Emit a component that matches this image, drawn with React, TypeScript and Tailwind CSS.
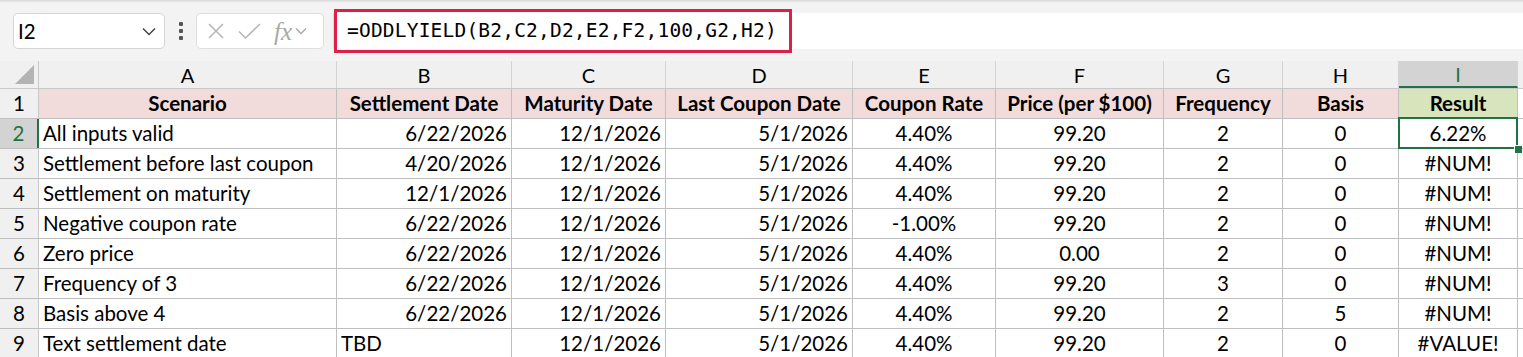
import React from "react";

const cols = ["A", "B", "C", "D", "E", "F", "G", "H", "I"];
const widths = [298, 175, 154, 187, 143, 168, 119, 116, 119];

const headers = [
  "Scenario",
  "Settlement Date",
  "Maturity Date",
  "Last Coupon Date",
  "Coupon Rate",
  "Price (per $100)",
  "Frequency",
  "Basis",
  "Result",
];

const rows: string[][] = [
  ["All inputs valid", "6/22/2026", "12/1/2026", "5/1/2026", "4.40%", "99.20", "2", "0", "6.22%"],
  ["Settlement before last coupon", "4/20/2026", "12/1/2026", "5/1/2026", "4.40%", "99.20", "2", "0", "#NUM!"],
  ["Settlement on maturity", "12/1/2026", "12/1/2026", "5/1/2026", "4.40%", "99.20", "2", "0", "#NUM!"],
  ["Negative coupon rate", "6/22/2026", "12/1/2026", "5/1/2026", "-1.00%", "99.20", "2", "0", "#NUM!"],
  ["Zero price", "6/22/2026", "12/1/2026", "5/1/2026", "4.40%", "0.00", "2", "0", "#NUM!"],
  ["Frequency of 3", "6/22/2026", "12/1/2026", "5/1/2026", "4.40%", "99.20", "3", "0", "#NUM!"],
  ["Basis above 4", "6/22/2026", "12/1/2026", "5/1/2026", "4.40%", "99.20", "2", "5", "#NUM!"],
  ["Text settlement date", "TBD", "12/1/2026", "5/1/2026", "4.40%", "99.20", "2", "0", "#VALUE!"],
];

function align(ci: number, v: string) {
  if (ci === 0) return "justify-start pl-[4px]";
  if (ci <= 3) {
    if (v === "TBD") return "justify-start pl-[4px]";
    return "justify-end pr-[4px]";
  }
  return "justify-center";
}

export default function App() {
  return (
    <div className="w-[1523px] h-[357px] overflow-hidden bg-white font-['Lato',sans-serif] text-[20.5px] text-black">
      {/* toolbar */}
      <div className="relative h-[61px] bg-[#f3f3f3]">
        <div className="h-[3px] bg-gradient-to-b from-[#d9d9d9] to-[#f3f3f3]" />
        <div className="flex items-start pt-[10px] pl-[13px]">
          <div className="w-[152px] h-[36px] bg-white border border-[#d5d5d5] rounded-[5px] flex items-center justify-between pl-[4px] pr-[8px]">
            <span className="text-[20.5px]">I2</span>
            <svg width="14" height="9" viewBox="0 0 14 9" fill="none">
              <path d="M1 1.5l6 6 6-6" stroke="#444" strokeWidth="1.5" />
            </svg>
          </div>
          <div className="w-[31px] h-[36px] flex flex-col items-center justify-center gap-[3px]">
            <span className="w-[4px] h-[4px] bg-[#555] rounded-[1px]" />
            <span className="w-[4px] h-[4px] bg-[#555] rounded-[1px]" />
            <span className="w-[4px] h-[4px] bg-[#555] rounded-[1px]" />
          </div>
          <div className="w-[128px] h-[36px] bg-white border border-[#dedede] rounded-[5px] flex items-center pl-[10px] gap-[13px]">
            <svg width="18" height="18" viewBox="0 0 18 18" fill="none">
              <path d="M2 2l14 14M16 2L2 16" stroke="#b4b4b4" strokeWidth="1.5" />
            </svg>
            <svg width="23" height="17" viewBox="0 0 23 17" fill="none">
              <path d="M1 8.5l6.5 6.5L22 1" stroke="#b4b4b4" strokeWidth="1.5" />
            </svg>
            <div className="flex items-center gap-[3px]">
              <span className="font-['Liberation_Serif',serif] italic text-[25px] text-[#a8a8a8] leading-none">fx</span>
              <svg width="12" height="8" viewBox="0 0 12 8" fill="none">
                <path d="M1 1.5l5 5 5-5" stroke="#a8a8a8" strokeWidth="1.4" />
              </svg>
            </div>
          </div>
          <div className="ml-[9px] flex-1 h-[36px] bg-white border-l border-[#dcdcdc] flex items-center pl-[13px]">
            <span className="font-['DejaVu_Sans_Mono',monospace] text-[19.5px] tracking-[0.2px]">
              =ODDLYIELD(B2,C2,D2,E2,F2,100,G2,H2)
            </span>
          </div>
        </div>
        <div className="absolute left-[334px] top-[9px] w-[458px] h-[44px] border-[3px] border-[#dc1f4b]" />
      </div>

      {/* column headers */}
      <div className="flex h-[28px] bg-[#f0f0f0] border-b border-[#c8c8c8]">
        <div className="relative w-[39px] border-r border-[#c8c8c8] shrink-0">
          <svg className="absolute right-[4px] bottom-[4px]" width="19" height="19" viewBox="0 0 19 19">
            <path d="M19 0L19 19L0 19Z" fill="#b3b3b3" />
          </svg>
        </div>
        {cols.map((c, i) => (
          <div
            key={c}
            style={{ width: widths[i] }}
            className={
              "shrink-0 flex items-center justify-center border-r border-[#d4d4d4] text-[20px] " +
              (c === "I" ? "bg-[#d3d3d3] text-[#217346] border-b-2 border-b-[#217346]" : "")
            }
          >
            {c}
          </div>
        ))}
        <div className="flex-1" />
      </div>

      {/* row 1 */}
      <div className="flex h-[30px] border-b border-[#bfbfbf]">
        <div className="w-[39px] shrink-0 bg-[#f0f0f0] border-r border-[#c8c8c8] flex items-center justify-center">1</div>
        {headers.map((h, i) => (
          <div
            key={h}
            style={{ width: widths[i] }}
            className={
              "shrink-0 flex items-center justify-center font-bold border-r border-[#bfbfbf] " +
              (i === 8 ? "bg-[#d8e4bc]" : "bg-[#f2dcdb]")
            }
          >
            {h}
          </div>
        ))}
        <div className="flex-1" />
      </div>

      {rows.map((r, ri) => (
        <div key={ri} className={"flex h-[30px] border-b border-[#bfbfbf] " + (ri === 0 ? "relative z-10" : "")}>
          <div
            className={
              "w-[39px] shrink-0 border-r flex items-center justify-center " +
              (ri === 0
                ? "bg-[#d3d3d3] text-[#217346] border-r-2 border-r-[#217346]"
                : "bg-[#f0f0f0] border-[#c8c8c8]")
            }
          >
            {ri + 2}
          </div>
          {r.map((v, ci) => (
            <div
              key={ci}
              style={{ width: widths[ci] }}
              className={"relative shrink-0 flex items-center border-r border-[#bfbfbf] " + align(ci, v)}
            >
              {v}
              {ri === 0 && ci === 8 && (
                <>
                  <div className="absolute left-[-1px] top-[-2px] right-[-1px] bottom-[-1px] border-2 border-[#217346]" />
                  <div className="absolute right-[-5px] bottom-[-5px] w-[8px] h-[8px] bg-[#217346] border-l border-t border-white" />
                </>
              )}
            </div>
          ))}
          <div className="flex-1" />
        </div>
      ))}
    </div>
  );
}
